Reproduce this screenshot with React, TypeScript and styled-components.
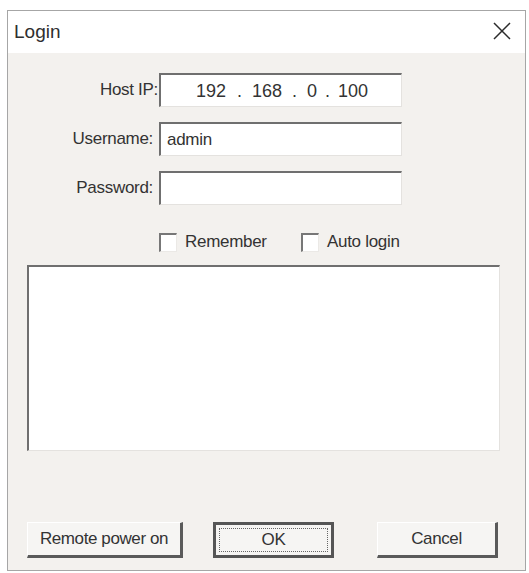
import React from "react";
import styled, { createGlobalStyle, css } from "styled-components";

const Global = createGlobalStyle`
  html, body { margin: 0; padding: 0; background: #ffffff; }
  body { font-family: "Liberation Sans", Arial, sans-serif; color: #333; }
`;

const Page = styled.div`
  padding: 10px 4px 2px 7px;
`;

const Window = styled.div`
  width: 517px;
  height: 559px;
  border: 1px solid #a6a6a6;
  display: flex;
  flex-direction: column;
`;

const TitleBar = styled.div`
  height: 42px;
  background: #ffffff;
  display: flex;
  align-items: center;
  justify-content: space-between;
  padding: 0 14px 0 6px;
  flex: none;
`;

const Title = styled.span`
  font-size: 19px;
  color: #2e2e2e;
  margin-top: -1px;
`;

const CloseIcon = styled.svg`
  width: 18px;
  height: 18px;
  margin-top: -2px;
`;

const Body = styled.div`
  flex: 1;
  background: #f3f1ee;
  padding: 20px 24px 11px 19px;
  display: flex;
  flex-direction: column;
`;

const FormGrid = styled.div`
  display: grid;
  grid-template-columns: 125px 243px;
  column-gap: 7px;
  row-gap: 15px;
  align-items: center;
`;

const Label = styled.label<{ $tight?: boolean }>`
  justify-self: end;
  font-size: 17px;
  letter-spacing: -0.3px;
  color: #333;
  margin-right: ${(p) => (p.$tight ? "-6px" : "-1px")};
`;

const sunken = css`
  background: #ffffff;
  border-top: 2px solid #6f6f6f;
  border-left: 2px solid #6f6f6f;
  border-right: 1px solid #e4e2df;
  border-bottom: 1px solid #e4e2df;
  box-sizing: border-box;
`;

const Field = styled.div`
  ${sunken};
  height: 34px;
  display: flex;
  align-items: center;
  padding-left: 6px;
  font-size: 17px;
  letter-spacing: -0.3px;
  color: #333;
`;

const IpField = styled(Field)`
  padding-left: 35px;
  padding-top: 2px;
`;

const IpPart = styled.span<{ $w: number }>`
  display: inline-block;
  width: ${(p) => p.$w}px;
  text-align: left;
  font-size: 18px;
  letter-spacing: 0;
`;

const CheckRow = styled.div`
  margin-top: 27px;
  height: 20px;
  display: flex;
  align-items: center;
  padding-left: 132px;
`;

const CheckItem = styled.label<{ $w: number }>`
  display: flex;
  align-items: center;
  gap: 8px;
  width: ${(p) => p.$w}px;
  font-size: 17px;
  letter-spacing: -0.3px;
  color: #333;
`;

const Box = styled.span`
  width: 18px;
  height: 19px;
  box-sizing: border-box;
  background: #ffffff;
  border-top: 2px solid #777;
  border-left: 2px solid #777;
  border-right: 1px solid #ebe9e6;
  border-bottom: 1px solid #ebe9e6;
`;

const ListArea = styled.div`
  ${sunken};
  margin-top: 13px;
  height: 186px;
  width: 473px;
`;

const ButtonRow = styled.div`
  margin-top: 71px;
  height: 36px;
  display: flex;
`;

const Button = styled.button<{ $w: number; $gap: number; $default?: boolean }>`
  width: ${(p) => p.$w}px;
  height: 36px;
  margin-left: ${(p) => p.$gap}px;
  box-sizing: border-box;
  font-family: "Liberation Sans", Arial, sans-serif;
  font-size: 17px;
  letter-spacing: -0.4px;
  color: #333;
  background: #f6f5f3;
  padding: 0;
  position: relative;
  ${(p) =>
    p.$default
      ? css`
          border: 3px solid #555;
          &::after {
            content: "";
            position: absolute;
            inset: 3px;
            border: 1px dotted #666;
          }
        `
      : css`
          border-top: 1px solid #ffffff;
          border-left: 1px solid #ffffff;
          border-right: 3px solid #5a5a5a;
          border-bottom: 3px solid #5a5a5a;
        `}
`;

export default function App() {
  return (
    <Page>
      <Global />
      <Window>
        <TitleBar>
          <Title>Login</Title>
          <CloseIcon viewBox="0 0 18 18">
            <path d="M1 1 L17 17 M17 1 L1 17" stroke="#2b2b2b" strokeWidth="1.5" fill="none" />
          </CloseIcon>
        </TitleBar>
        <Body>
          <FormGrid>
            <Label $tight>Host IP:</Label>
            <IpField>
              <IpPart $w={41}>192</IpPart>
              <IpPart $w={15}>.</IpPart>
              <IpPart $w={40}>168</IpPart>
              <IpPart $w={15}>.</IpPart>
              <IpPart $w={18}>0</IpPart>
              <IpPart $w={13}>.</IpPart>
              <IpPart $w={32}>100</IpPart>
            </IpField>
            <Label>Username:</Label>
            <Field>admin</Field>
            <Label>Password:</Label>
            <Field />
          </FormGrid>
          <CheckRow>
            <CheckItem $w={142}>
              <Box />
              Remember
            </CheckItem>
            <CheckItem $w={120}>
              <Box />
              Auto login
            </CheckItem>
          </CheckRow>
          <ListArea />
          <ButtonRow>
            <Button $w={156} $gap={0}>Remote power on</Button>
            <Button $w={121} $gap={30} $default>OK</Button>
            <Button $w={121} $gap={43}>Cancel</Button>
          </ButtonRow>
        </Body>
      </Window>
    </Page>
  );
}
